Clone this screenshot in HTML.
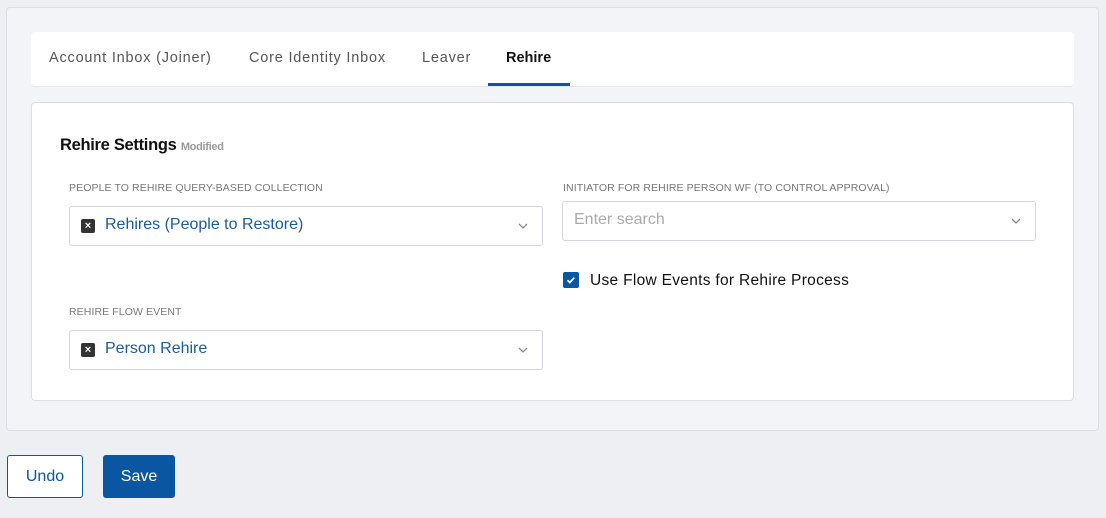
<!DOCTYPE html>
<html><head><style>
*{box-sizing:border-box;margin:0;padding:0}
body{width:1106px;height:518px;background:#eeeff3;font-family:"Liberation Sans",sans-serif;position:relative;overflow:hidden}
.outer{position:absolute;left:6px;top:7px;width:1093px;height:424px;background:#f3f4f7;border:1px solid #dcdee6;border-radius:4px}
.tabs{position:absolute;left:31px;top:32px;width:1043px;height:55px;background:#fff;border-radius:4px;border-bottom:1px solid #e3e5ea}
.tab{position:absolute;top:18px;font-size:14.5px;color:#555;letter-spacing:.8px}
.card{position:absolute;left:31px;top:102px;width:1043px;height:299px;background:#fff;border:1px solid #dcdee6;border-radius:4px}
.lbl{position:absolute;font-size:10.5px;color:#777;letter-spacing:.1px}
.sel{position:absolute;height:40px;border:1px solid #d3d5da;border-radius:3px;background:#fff}
.x{position:absolute;left:11px;top:12px;width:14px;height:14px;background:#333;border-radius:2px;color:#fff;font-size:11px;font-weight:bold;text-align:center;line-height:14px}
.val{position:absolute;left:35px;top:9px;font-size:16px;color:#1a5c9c}
.chev{position:absolute;right:14px;top:15px}
.btn{position:absolute;top:455px;height:43px;border-radius:3px;font-size:16px;text-align:center;line-height:41px}
</style></head><body>
<div class="outer"></div>
<div class="tabs">
<div class="tab" style="left:18px">Account Inbox (Joiner)</div>
<div class="tab" style="left:218px">Core Identity Inbox</div>
<div class="tab" style="left:391px">Leaver</div>
<div class="tab" style="left:475px;color:#111;font-weight:bold;letter-spacing:0">Rehire</div>
<div style="position:absolute;left:457px;top:51px;width:82px;height:3px;background:#0b56a0"></div>
</div>
<div class="card">
<div style="position:absolute;left:28px;top:33px;font-size:16.5px;font-weight:bold;color:#111;letter-spacing:-.3px">Rehire Settings <span style="font-size:11px;color:#999">Modified</span></div>
<div class="lbl" style="left:37px;top:79px">PEOPLE TO REHIRE QUERY-BASED COLLECTION</div>
<div class="sel" style="left:37px;top:103px;width:474px"><div class="x">×</div><div class="val">Rehires (People to Restore)</div>
<svg class="chev" width="10" height="8" viewBox="0 0 10 8"><path d="M1 2l4 4 4-4" fill="none" stroke="#888" stroke-width="1.3"/></svg></div>
<div class="lbl" style="left:531px;top:79px">INITIATOR FOR REHIRE PERSON WF (TO CONTROL APPROVAL)</div>
<div class="sel" style="left:530px;top:98px;width:474px"><div class="val" style="left:11px;color:#aaa">Enter search</div>
<svg class="chev" width="10" height="8" viewBox="0 0 10 8"><path d="M1 2l4 4 4-4" fill="none" stroke="#888" stroke-width="1.3"/></svg></div>
<div style="position:absolute;left:531px;top:169px;width:16px;height:16px;background:#0b56a0;border-radius:2px"><svg width="16" height="16"><path d="M4.5 8.3l2.3 2.2 4.5-4.8" fill="none" stroke="#fff" stroke-width="1.7"/></svg></div>
<div style="position:absolute;left:558px;top:169px;font-size:15.5px;color:#111;letter-spacing:.3px">Use Flow Events for Rehire Process</div>
<div class="lbl" style="left:37px;top:203px">REHIRE FLOW EVENT</div>
<div class="sel" style="left:37px;top:227px;width:474px"><div class="x">×</div><div class="val">Person Rehire</div>
<svg class="chev" width="10" height="8" viewBox="0 0 10 8"><path d="M1 2l4 4 4-4" fill="none" stroke="#888" stroke-width="1.3"/></svg></div>
</div>
<div class="btn" style="left:7px;width:76px;background:#fff;border:1px solid #0b56a0;color:#0b56a0">Undo</div>
<div class="btn" style="left:103px;width:72px;background:#0b56a0;color:#fff;line-height:43px">Save</div>
</body></html>
